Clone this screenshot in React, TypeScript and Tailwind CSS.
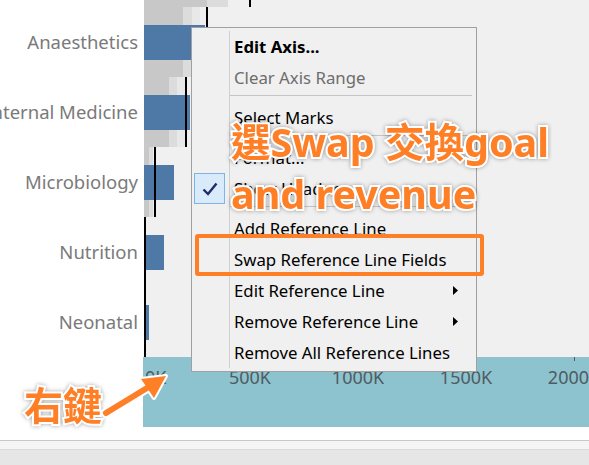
import React from 'react';

const rows = [
  { label: 'Anaesthetics', blue: 61, line: 62, bands: [39, 48, 56] },
  { label: 'Internal Medicine', blue: 46, line: 41, bands: [25, 33, 42] },
  { label: 'Microbiology', blue: 30, line: 10, bands: [5, 9, 9] },
  { label: 'Nutrition', blue: 20, line: 0, bands: [0, 0, 0] },
  { label: 'Neonatal', blue: 5, line: 0, bands: [0, 0, 0] },
];

const axisLabels = [
  { text: '500K', center: 106 },
  { text: '1000K', center: 214 },
  { text: '1500K', center: 322 },
  { text: '2000K', center: 430 },
];

const menuItems: (
  | { type: 'item'; label: string; bold?: boolean; disabled?: boolean; checked?: boolean; sub?: boolean }
  | { type: 'sep' }
)[] = [
  { type: 'item', label: 'Edit Axis...', bold: true },
  { type: 'item', label: 'Clear Axis Range', disabled: true },
  { type: 'sep' },
  { type: 'item', label: 'Select Marks' },
  { type: 'sep' },
  { type: 'item', label: 'Format...' },
  { type: 'item', label: 'Show Header', checked: true },
  { type: 'sep' },
  { type: 'item', label: 'Add Reference Line' },
  { type: 'item', label: 'Swap Reference Line Fields' },
  { type: 'item', label: 'Edit Reference Line', sub: true },
  { type: 'item', label: 'Remove Reference Line', sub: true },
  { type: 'item', label: 'Remove All Reference Lines' },
];

const orangeText =
  "font-bold text-[#ff7f27] [-webkit-text-stroke:4px_white] [paint-order:stroke_fill] drop-shadow-[0_0_2px_rgba(0,0,0,0.35)] whitespace-nowrap font-['Noto_Sans','Noto_Sans_CJK_TC',sans-serif]";

const BarChart: React.FC = () => (
  <svg width="445" height="357" className="block">
    {/* piece of the row above */}
    <rect x="0" y="0" width="63" height="7" fill="#c8c8c8" />
    <rect x="63" y="0" width="21" height="7" fill="#dcdcdc" />
    <rect x="105" y="0" width="2" height="7" fill="#000" />
    {rows.map((r, i) => {
      const top = 7 + i * 70;
      return (
        <g key={r.label}>
          {r.bands[2] > 0 && <rect x="0" y={top} width={r.bands[2]} height="70" fill="#e8e8e8" />}
          {r.bands[1] > 0 && <rect x="0" y={top} width={r.bands[1]} height="70" fill="#dcdcdc" />}
          {r.bands[0] > 0 && <rect x="0" y={top} width={r.bands[0]} height="70" fill="#c8c8c8" />}
          <rect x="0" y={top + 18} width={r.blue} height="35" fill="#4e79a7" />
          <rect x={r.line} y={top} width="2" height="70" fill="#000" />
        </g>
      );
    })}
  </svg>
);

const Check: React.FC = () => (
  <svg width="16" height="14" viewBox="0 0 16 14">
    <path d="M1.5 7.5 L6 12 L14.5 1.5" fill="none" stroke="#262a6b" strokeWidth="2.4" />
  </svg>
);

const ContextMenu: React.FC = () => (
  <div className="absolute left-[191px] top-[27px] w-[286px] h-[345px] bg-[#f0f0f0] border border-[#a0a0a0] py-[3px] font-['Noto_Sans',sans-serif] text-[16.8px] text-black">
    {menuItems.map((m, i) =>
      m.type === 'sep' ? (
        <div key={i} className="flex h-[9px]">
          <div className="w-[38px] border-r border-[#d0d0d0]" />
          <div className="flex-1 pt-[2px] pr-[4px]">
            <div className="h-px bg-[#c4c4c4]" />
          </div>
        </div>
      ) : (
        <div key={i} className="flex h-[31px]">
          <div className="w-[38px] border-r border-[#d0d0d0] flex items-center pl-[2px]">
            {m.checked && (
              <div className="w-[31px] h-[31px] bg-[#d9ebfb] border border-[#7fb2e5] flex items-center justify-center">
                <Check />
              </div>
            )}
          </div>
          <div
            className={`flex-1 flex items-center pl-[4px] pr-[18px] justify-between leading-[31px] ${
              m.bold ? 'font-bold' : ''
            } ${m.disabled ? 'text-[#6d6d6d]' : ''}`}
          >
            <span>{m.label}</span>
            {m.sub && (
              <svg width="5" height="9" viewBox="0 0 5 9">
                <path d="M0 0 L5 4.5 L0 9 Z" fill="#000" />
              </svg>
            )}
          </div>
        </div>
      )
    )}
  </div>
);

const App: React.FC = () => {
  return (
    <div className="relative w-[589px] h-[465px] overflow-hidden bg-white font-['Noto_Sans',sans-serif]">
      {/* chart */}
      <div className="flex h-[357px]">
        <div className="w-[144px] pt-[7px] bg-white">
          {rows.map((r) => (
            <div
              key={r.label}
              className="h-[70px] flex items-center justify-end overflow-hidden pr-[6px] whitespace-nowrap text-[18.5px] text-[#7a7a7a]"
            >
              {r.label}
            </div>
          ))}
        </div>
        <div className="flex-1 bg-[#f0f0f0]">
          <BarChart />
        </div>
      </div>

      {/* axis */}
      <div className="flex h-[70px]">
        <div className="w-[143px] bg-white" />
        <div className="relative flex-1 bg-[#8dc3cf] text-[18px] text-[#4f5b60]">
          <span className="absolute left-[2px] top-[7px]">0K</span>
          {axisLabels.map((a) => (
            <span
              key={a.text}
              className="absolute top-[7px] -translate-x-1/2"
              style={{ left: a.center + 1 }}
            >
              {a.text}
            </span>
          ))}
          <div className="absolute left-[431px] top-0 w-px h-[4px] bg-[#4f5b60]" />
        </div>
      </div>

      {/* bottom strips */}
      <div className="h-[13px] bg-white" />
      <div className="h-[9px] bg-[#f5f5f5] border-t border-[#c8c8c8]" />
      <div className="h-[16px] bg-[#e6e6e6] border-t border-[#dadada]" />

      <ContextMenu />

      {/* annotations */}
      <div className="absolute left-[195px] top-[234px] w-[289px] h-[42px] border-[4px] border-[#ff7f27] rounded-[3px]" />
      <div className={`absolute left-[231px] top-[116px] text-[39.5px] leading-[52px] ${orangeText}`}>
        選Swap 交換goal
        <br />
        and revenue
      </div>
      <div className={`absolute left-[24px] top-[381px] text-[39px] leading-[48px] ${orangeText}`}>右鍵</div>
      <svg className="absolute left-[95px] top-[368px]" width="80" height="55">
        <g strokeLinecap="round" strokeLinejoin="round">
          <line x1="11" y1="45" x2="52" y2="20" stroke="#fff" strokeWidth="10" />
          <polygon points="46,11 71,8 59,30" fill="#fff" stroke="#fff" strokeWidth="4" />
          <line x1="11" y1="45" x2="52" y2="20" stroke="#ff7f27" strokeWidth="6" />
          <polygon points="46,11 71,8 59,30" fill="#ff7f27" />
        </g>
      </svg>
    </div>
  );
};

export default App;
